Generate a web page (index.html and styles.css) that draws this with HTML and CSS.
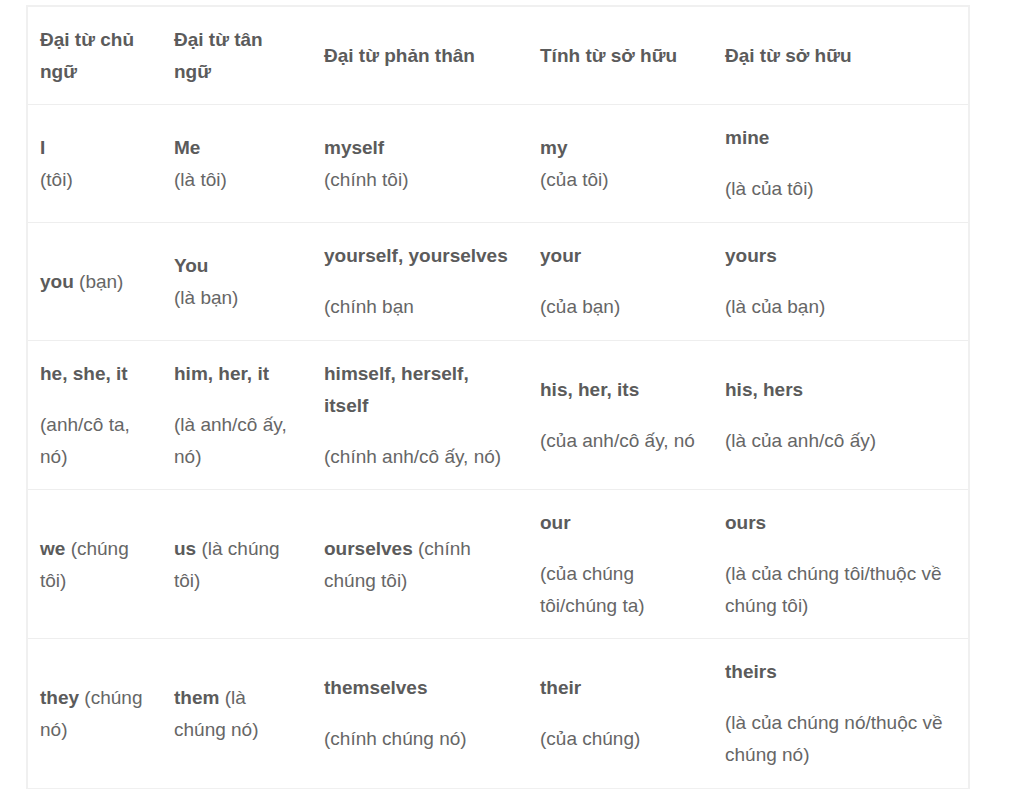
FILE: index.html
```html
<!DOCTYPE html>
<html lang="vi">
<head>
<meta charset="utf-8">
<title>Đại từ</title>
<link rel="stylesheet" href="styles.css">
</head>
<body>
<div class="wrap">
<table class="pron">
  <colgroup>
    <col class="c1"><col class="c2"><col class="c3"><col class="c4"><col class="c5">
  </colgroup>
  <thead>
    <tr>
      <th>Đại từ chủ ngữ</th>
      <th>Đại từ tân ngữ</th>
      <th>Đại từ phản thân</th>
      <th>Tính từ sở hữu</th>
      <th>Đại từ sở hữu</th>
    </tr>
  </thead>
  <tbody>
    <tr>
      <td><strong>I</strong><br>(tôi)</td>
      <td><strong>Me</strong><br>(là tôi)</td>
      <td><strong>myself</strong><br>(chính tôi)</td>
      <td><strong>my</strong><br>(của tôi)</td>
      <td><p><strong>mine</strong></p><p>(là của tôi)</p></td>
    </tr>
    <tr>
      <td><strong>you</strong> (bạn)</td>
      <td><strong>You</strong><br>(là bạn)</td>
      <td><p><strong>yourself, yourselves</strong></p><p>(chính bạn</p></td>
      <td><p><strong>your</strong></p><p>(của bạn)</p></td>
      <td><p><strong>yours</strong></p><p>(là của bạn)</p></td>
    </tr>
    <tr class="tall">
      <td><p><strong>he, she, it</strong></p><p>(anh/cô ta, nó)</p></td>
      <td><p><strong>him, her, it</strong></p><p>(là anh/cô ấy, nó)</p></td>
      <td><p><strong>himself, herself, itself</strong></p><p>(chính anh/cô ấy, nó)</p></td>
      <td><p><strong>his, her, its</strong></p><p>(của anh/cô ấy, nó</p></td>
      <td><p><strong>his, hers</strong></p><p>(là của anh/cô ấy)</p></td>
    </tr>
    <tr class="tall">
      <td><strong>we</strong> (chúng tôi)</td>
      <td><strong>us</strong> (là chúng tôi)</td>
      <td><strong>ourselves</strong> (chính chúng tôi)</td>
      <td><p><strong>our</strong></p><p>(của chúng tôi/chúng ta)</p></td>
      <td><p><strong>ours</strong></p><p>(là của chúng tôi/thuộc về chúng tôi)</p></td>
    </tr>
    <tr>
      <td><strong>they</strong> (chúng nó)</td>
      <td><strong>them</strong> (là chúng nó)</td>
      <td><p><strong>themselves</strong></p><p>(chính chúng nó)</p></td>
      <td><p><strong>their</strong></p><p>(của chúng)</p></td>
      <td><p><strong>theirs</strong></p><p>(là của chúng nó/thuộc về chúng nó)</p></td>
    </tr>
  </tbody>
</table>
</div>
</body>
</html>
```

FILE: styles.css
```css
html, body {
  margin: 0;
  padding: 0;
  background: #fff;
}
.wrap {
  padding: 5px 0 0 26px;
}
.pron {
  width: 942px;
  border-collapse: collapse;
  table-layout: fixed;
  border: 2px solid #f0f0f0;
  font-family: "Liberation Sans", Arial, sans-serif;
  font-size: 19px;
  line-height: 32px;
  color: #666;
}
.c1 { width: 135px; }
.c2 { width: 150px; }
.c3 { width: 216px; }
.c4 { width: 185px; }
.c5 { width: 256px; }
.pron th,
.pron td {
  text-align: left;
  vertical-align: middle;
  padding: 17px 12px;
  border-bottom: 1px solid #eee;
}
.pron th {
  padding-bottom: 16px;
  font-weight: bold;
  color: #5b5b5b;
}
.pron .tall td {
  padding-bottom: 16px;
}
.pron strong {
  color: #5b5b5b;
}
.pron p {
  margin: 0 0 19px;
}
.pron p:last-child {
  margin-bottom: 0;
}
```
